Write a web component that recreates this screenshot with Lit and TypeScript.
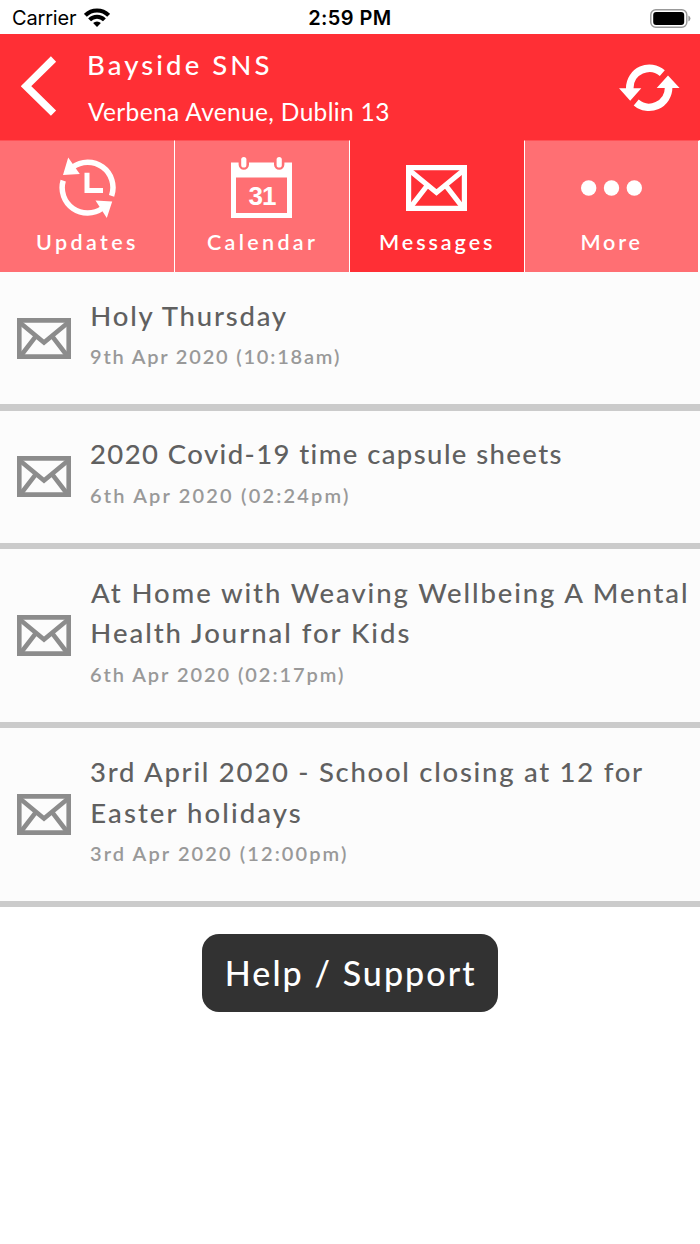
import { LitElement, html, css, svg } from "lit";
import { customElement, property } from "lit/decorators.js";
import { styleMap } from "lit/directives/style-map.js";

const FAMILY = '"Lato", "Open Sans", sans-serif';
const SYSTEM = '"Inter", "Roboto", sans-serif';
const pen = document.createElement("canvas").getContext("2d")!;

/** One line of text whose letter spacing is computed so that it spans a given width. */
@customElement("tracked-text")
class TrackedText extends LitElement {
  @property() text = "";
  @property({ type: Number }) span = 100;
  @property({ type: Number }) size = 20;
  @property({ type: Number }) weight = 400;
  @property() family = FAMILY;

  static styles = css`
    :host { display: block; white-space: pre; font-kerning: normal; }
    .line { display: block; }
  `;

  render() {
    pen.font = `${this.weight} ${this.size}px ${this.family}`;
    const m = pen.measureText(this.text);
    const ink = m.actualBoundingBoxRight + m.actualBoundingBoxLeft;
    const gap = (this.span - ink) / (this.text.length - 1);
    const look = {
      width: `${this.span}px`,
      fontFamily: this.family,
      fontSize: `${this.size}px`,
      fontWeight: String(this.weight),
      letterSpacing: `${gap.toFixed(3)}px`,
      textIndent: `${m.actualBoundingBoxLeft.toFixed(2)}px`,
    };
    return html`<span class="line" style=${styleMap(look)}>${this.text}</span>`;
  }
}

const label = (text: string, span: number, size: number, weight = 500, family = FAMILY) =>
  html`<tracked-text .text=${text} .span=${span} .size=${size} .weight=${weight} .family=${family}></tracked-text>`;

const clockIcon = svg`
  <path d="M14.5 10.3A25.3 25.3 0 0 1 53.6 38.8M5.2 23.6A25.3 25.3 0 0 0 44.5 51.1" fill="none" stroke="#fff" stroke-width="5.5"/>
  <path d="M10.2 .5L21.8 17L5 18zM37.5 43.5L54.2 44.5L48.8 61z" fill="#fff"/>
  <path d="M29 15.7V33.4H45" fill="none" stroke="#fff" stroke-width="5"/>`;

const calendarIcon = svg`
  <path fill-rule="evenodd" fill="#fff" d="M0 5.5H7.6V7.6A5.2 5.2 0 0 0 18 7.6V5.5H43V7.6A5.2 5.2 0 0 0 53.4 7.6V5.5H61V61H0zM5 20.5V56H56V20.5z"/>
  <rect x="10.2" y="0" width="5.2" height="10.6" rx="2.6" fill="#fff"/>
  <rect x="45.6" y="0" width="5.2" height="10.6" rx="2.6" fill="#fff"/>
  <text x="31.5" y="48" text-anchor="middle" font-family="Liberation Sans, sans-serif" font-weight="700" font-size="26" textLength="28" fill="#fff">31</text>`;

const envelope = (color: string) => svg`
  <path d="M2.6 2.6H58.4V43.4H2.6z" fill="none" stroke="${color}" stroke-width="5.2"/>
  <path d="M2.5 4.5L30.5 27.5L58.5 4.5M3.5 43.5L20.5 21.5M57.5 43.5L40.5 21.5" fill="none" stroke="${color}" stroke-width="5.2"/>`;

const dotsIcon = svg`<g fill="#fff"><circle cx="7.7" cy="7.7" r="7.7"/><circle cx="30.5" cy="7.7" r="7.7"/><circle cx="53.3" cy="7.7" r="7.7"/></g>`;

const tabs = [
  { name: "Updates", span: 98, box: "0 0 58 61", w: 58, h: 61, icon: clockIcon, on: false },
  { name: "Calendar", span: 108, box: "0 0 61 61", w: 61, h: 61, icon: calendarIcon, on: false },
  { name: "Messages", span: 112, box: "0 0 61 46", w: 61, h: 46, icon: envelope("#fff"), on: true },
  { name: "More", span: 58, box: "0 0 61 15.4", w: 61, h: 16, icon: dotsIcon, on: false },
];

const messages = [
  { lines: [["Holy Thursday", 196]], date: "9th Apr 2020 (10:18am)", span: 250 },
  { lines: [["2020 Covid-19 time capsule sheets", 470]], date: "6th Apr 2020 (02:24pm)", span: 259 },
  { lines: [["At Home with Weaving Wellbeing A Mental", 598], ["Health Journal for Kids", 317.5]], date: "6th Apr 2020 (02:17pm)", span: 254 },
  { lines: [["3rd April 2020 - School closing at 12 for", 552], ["Easter holidays", 208]], date: "3rd Apr 2020 (12:00pm)", span: 257 },
] as { lines: [string, number][]; date: string; span: number }[];

@customElement("app-root")
class AppRoot extends LitElement {
  static styles = css`
    :host { display: block; min-height: 1244px; background: #fff; overflow: hidden; }
    svg { display: block; flex: none; }
    .status { display: grid; grid-template-columns: 1fr auto 1fr; align-items: center; height: 34px; padding: 0 9px 0 12px; box-sizing: border-box; line-height: 35px; color: #000; }
    .carrier { display: flex; align-items: center; gap: 7px; padding-left: 1px; line-height: 37px; }
    .wifi { margin-bottom: 2px; }
    .time { line-height: 37px; padding-right: 4px; }
    .battery { justify-self: end; }
    .head { display: flex; align-items: flex-start; height: 106px; background: #ff2f35; color: #fff; padding: 0 20px 0 21px; box-sizing: border-box; }
    .back { margin-top: 22px; }
    .school { flex: 1; padding: 9px 0 0 31px; }
    .name { line-height: 44px; padding-left: 1px; }
    .addr { line-height: 50px; }
    .sync { margin-top: 30px; }
    .tabs { display: grid; grid-template-columns: 175px 175px 175px 1fr; height: 132px; }
    .tab { display: flex; flex-direction: column; align-items: center; border-right: 1px solid #fff; background: #ff6f73; color: #fff; border-top: 1px solid #ff5256; box-sizing: border-box; padding-right: 1px; }
    .tab:last-child { border-right-width: 2px; }
    .tab.on { background: #ff2f35; border-top-color: #ff2f35; }
    .pic { display: flex; align-items: center; height: 61px; margin-top: 16px; }
    .cap { line-height: 28px; margin-top: 10px; padding-right: 1px; }
    .row { display: flex; align-items: center; background: #fcfcfc; height: 132.1px; box-sizing: border-box; padding-left: 17px; }
    .row.tall { height: 172.6px; }
    .bar { height: 6.5px; background: #cbcbcb; }
    .body { align-self: flex-start; padding: 23.8px 0 0 20px; }
    .title { line-height: 40.5px; color: #606060; }
    .title.stem { padding-left: 1.3px; }
    .date { line-height: 41px; color: #999; margin-left: -1px; }
    .foot { display: flex; justify-content: center; padding-top: 27px; }
    .help { display: flex; justify-content: center; width: 296px; height: 78px; border-radius: 17px; background: #323232; color: #fff; line-height: 78px; padding-left: 2px; box-sizing: border-box; }
  `;

  render() {
    return html`
      <div class="status">
        <div class="carrier">
          ${label("Carrier", 64, 20, 400, SYSTEM)}
          <svg class="wifi" width="26" height="19" viewBox="0 0 26 19">
            <g fill="none" stroke="#000" stroke-width="4"><path d="M1.4 7.3A16.3 16.3 0 0 1 24.6 7.3M5.6 11.8A10.3 10.3 0 0 1 20.4 11.8"/></g>
            <path d="M13 19L9.1 15.1A5.6 5.6 0 0 1 16.9 15.1z"/>
          </svg>
        </div>
        <div class="time">${label("2:59 PM", 80.5, 20, 600, SYSTEM)}</div>
        <svg class="battery" width="41" height="20" viewBox="0 0 41 20">
          <rect x=".8" y=".8" width="36" height="17.4" rx="5" fill="none" stroke="#999" stroke-width="1.4"/>
          <rect x="3.2" y="3" width="31" height="13" rx="3"/>
          <path d="M38.4 6.4A3.2 3.2 0 0 1 38.4 12.4z" fill="#999"/>
        </svg>
      </div>
      <div class="head">
        <svg class="back" width="36" height="60" viewBox="0 0 36 60"><path d="M32.5 3L5 30.2L32.5 57.2" fill="none" stroke="#fff" stroke-width="7.4"/></svg>
        <div class="school">
          <div class="name">${label("Bayside SNS", 179.5, 27.5)}</div>
          <div class="addr">${label("Verbena Avenue, Dublin 13", 301, 24.5, 400)}</div>
        </div>
        <svg class="sync" width="61" height="48" viewBox="0 0 61 48">
          <path d="M10.8 25V23.8A19.6 19.6 0 0 1 43.3 9.2M49.6 22V23.8A19.6 19.6 0 0 1 17.2 38.5" fill="none" stroke="#fff" stroke-width="7.6"/>
          <path d="M0 24.2H22.3L11.2 36.8zM37.7 24H60.6L49 11.5z" fill="#fff"/>
        </svg>
      </div>
      <div class="tabs">
        ${tabs.map((t) => html`
          <div class="tab ${t.on ? "on" : ""}">
            <div class="pic"><svg width=${t.w} height=${t.h} viewBox=${t.box}>${t.icon}</svg></div>
            <div class="cap">${label(t.name, t.span, 21.5, 600)}</div>
          </div>`)}
      </div>
      ${messages.map((m) => html`
        <div class="row ${m.lines.length > 1 ? "tall" : ""}">
          <svg class="mail" width="54" height="41" viewBox="0 0 61 46" preserveAspectRatio="none">${envelope("#8c8c8c")}</svg>
          <div class="body">
            ${m.lines.map(([t, w]) => html`<div class="title ${/^[HE]/.test(t) ? "stem" : ""}">${label(t, w, 27.5)}</div>`)}
            <div class="date">${label(m.date, m.span, 20, 600)}</div>
          </div>
        </div>
        <div class="bar"></div>`)}
      <div class="foot"><div class="help">${label("Help / Support", 246.5, 34, 500)}</div></div>
    `;
  }
}
